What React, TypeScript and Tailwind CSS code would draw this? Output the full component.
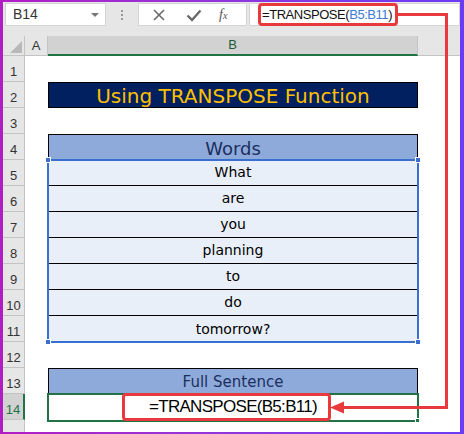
import React from "react";

const words = ["What", "are", "you", "planning", "to", "do", "tomorrow?"];

function RowHead({ n, active }: { n: number | string; active?: boolean }) {
  return (
    <div
      className={
        "w-[22px] shrink-0 h-full flex items-end justify-center pb-[3px] text-[13px] leading-none border-b border-[#c4c4c4] " +
        (active
          ? "bg-[#d2d2d2] text-[#217346] border-r-2 border-r-[#217346]"
          : "bg-[#e6e6e6] text-[#333] border-r border-r-[#c4c4c4]")
      }
      style={{ fontFamily: "'Liberation Sans', Arial, sans-serif" }}
    >
      {n}
    </div>
  );
}

function Row({ n, active, children }: { n: number; active?: boolean; children?: React.ReactNode }) {
  return (
    <div className="flex h-[26px] shrink-0">
      <RowHead n={n} active={active} />
      <div className="w-[23px] shrink-0 bg-white" />
      <div className="w-[370px] shrink-0 bg-white">{children}</div>
      <div className="flex-1 bg-white" />
    </div>
  );
}

const comic = { fontFamily: "'DejaVu Sans', 'Noto Sans', sans-serif" };
const ui = { fontFamily: "'Liberation Sans', Arial, sans-serif" };

export default function App() {
  return (
    <div className="relative w-[464px] h-[434px] overflow-hidden bg-gradient-to-r from-[#b21cc4] to-[#6a3cf6] pl-[3px] pr-[4px] pt-[2px] pb-[2px]">
      <div className="w-full h-full bg-[#e6e6e6] flex flex-col overflow-hidden">
        {/* formula bar */}
        <div className="h-[34px] shrink-0 flex items-start pt-[1px]">
          <div className="ml-[2px] w-[101px] h-[23px] bg-white border border-[#d4d4d4] flex items-center justify-between pl-[7px] pr-[6px]">
            <span className="text-[14px] text-[#333]" style={ui}>B14</span>
            <span className="w-0 h-0 border-l-[4px] border-r-[4px] border-t-[4px] border-l-transparent border-r-transparent border-t-[#777]" />
          </div>
          <div className="w-[32px] h-[23px] flex flex-col items-center justify-center gap-[2px]">
            <span className="w-[2px] h-[2px] bg-[#9a9a9a]" />
            <span className="w-[2px] h-[2px] bg-[#9a9a9a]" />
            <span className="w-[2px] h-[2px] bg-[#9a9a9a]" />
          </div>
          <div className="w-[109px] h-[23px] bg-white border border-[#d4d4d4] flex items-center">
            <svg width="14" height="14" viewBox="0 0 14 14" className="ml-[13px]">
              <path d="M2 2 L12 12 M12 2 L2 12" stroke="#6a6a6a" strokeWidth="1.6" />
            </svg>
            <svg width="16" height="14" viewBox="0 0 16 14" className="ml-[20px]">
              <path d="M1.5 7.5 L6 12 L14.5 2.5" stroke="#6a6a6a" strokeWidth="2.4" fill="none" />
            </svg>
            <span className="ml-[17px] text-[14px] italic text-[#555]" style={{ fontFamily: "'Liberation Serif', serif" }}>
              f<span className="text-[10px]">x</span>
            </span>
          </div>
          <div className="ml-[2px] flex-1 h-[23px] bg-white border border-[#d4d4d4] flex items-center pl-[12px]">
            <span className="text-[13px] text-[#111] tracking-[-0.45px]" style={ui}>
              =TRANSPOSE(<span className="text-[#3a7bd5]">B5:B11</span>)
            </span>
          </div>
        </div>

        {/* column headers */}
        <div className="flex h-[20px] shrink-0">
          <div className="w-[22px] shrink-0 bg-[#e6e6e6] border-r border-b border-[#c4c4c4] flex items-end justify-end pr-[2px] pb-[2px]">
            <svg width="12" height="12" viewBox="0 0 12 12">
              <polygon points="12,0 12,12 0,12" fill="#b8b8b8" />
            </svg>
          </div>
          <div className="w-[23px] shrink-0 bg-[#e6e6e6] border-r border-b border-[#c4c4c4] flex items-center justify-center text-[13px] text-[#333]" style={ui}>A</div>
          <div className="w-[370px] shrink-0 bg-[#d2d2d2] border-r border-[#c4c4c4] border-b-2 border-b-[#217346] flex items-center justify-center text-[13px] text-[#1d5a37]" style={ui}>B</div>
          <div className="flex-1 bg-[#e6e6e6] border-b border-[#c4c4c4]" />
        </div>

        {/* rows */}
        <Row n={1} />
        <Row n={2}>
          <div className="h-full bg-[#002060] border border-black flex items-center justify-center text-[20px] text-[#ffc000] pt-[1px]" style={comic}>
            Using TRANSPOSE Function
          </div>
        </Row>
        <Row n={3} />
        <Row n={4}>
          <div className="h-full bg-[#8eaadb] border-t border-l border-r border-black flex items-center justify-center text-[18px] text-[#1c2f5e] pt-[2px]" style={comic}>
            Words
          </div>
        </Row>
        {words.map((w, i) => (
          <Row key={w} n={5 + i}>
            <div className={"h-full bg-[#e9eff8] flex items-center justify-center text-[14px] text-black " + (i < 6 ? "border-b border-black" : "")} style={comic}>
              {w}
            </div>
          </Row>
        ))}
        <Row n={12} />
        <Row n={13}>
          <div className="h-full bg-[#8eaadb] border-t border-l border-r border-black flex items-center justify-center text-[15px] text-[#1c2f5e] pt-[2px]" style={comic}>
            Full Sentence
          </div>
        </Row>
        <Row n={14} active>
          <div className="h-full flex items-center justify-center text-[17px] tracking-[-0.7px] text-black" style={ui}>
            =TRANSPOSE(B5:B11)
          </div>
        </Row>
        <div className="flex flex-1">
          <div className="w-[22px] shrink-0 bg-[#e6e6e6] border-r border-[#c4c4c4]" />
          <div className="flex-1 bg-white" />
        </div>
      </div>

      {/* selection range */}
      <div className="absolute left-[47px] top-[159px] w-[372px] h-[184px] border-2 border-[#3a6fcf]" />
      <div className="absolute left-[45px] top-[157px] w-[6px] h-[6px] bg-[#3a6fcf] border border-white" />
      <div className="absolute left-[415px] top-[157px] w-[6px] h-[6px] bg-[#3a6fcf] border border-white" />
      <div className="absolute left-[45px] top-[339px] w-[6px] h-[6px] bg-[#3a6fcf] border border-white" />
      <div className="absolute left-[415px] top-[339px] w-[6px] h-[6px] bg-[#3a6fcf] border border-white" />

      {/* active cell */}
      <div className="absolute left-[47px] top-[393px] w-[372px] h-[29px] border-2 border-[#217346]" />
      <div className="absolute left-[415px] top-[418px] w-[5px] h-[5px] bg-[#217346] border border-white" />

      {/* red highlight boxes */}
      <div className="absolute left-[258px] top-[3px] w-[140px] h-[23px] border-[3px] border-[#e8393d] rounded-[4px]" />
      <div className="absolute left-[122px] top-[393px] w-[209px] h-[28px] border-[3px] border-[#e8393d] rounded-[4px]" />

      {/* arrow */}
      <svg className="absolute left-0 top-0 pointer-events-none" width="464" height="434" viewBox="0 0 464 434">
        <path d="M397 14.5 H446.5 V407.5 H340" stroke="#e8393d" strokeWidth="3" fill="none" />
        <polygon points="330,407.5 344,401.5 344,413.5" fill="#e8393d" />
      </svg>
    </div>
  );
}
